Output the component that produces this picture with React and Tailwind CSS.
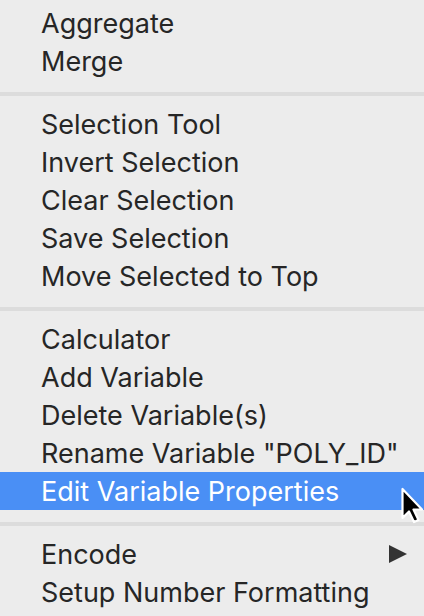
import React from "react";

const Row = ({ children, active, arrow }) => (
  <div
    className={
      "h-[38px] flex items-center pl-[41px] pr-[17px] " +
      (active ? "bg-[#4a8ff5] text-white" : "text-[#262626]")
    }
  >
    <span className="flex-1 whitespace-nowrap pt-[1px]">{children}</span>
    {arrow && (
      <svg width="18" height="18" viewBox="0 0 18 18">
        <path d="M0 0 L18 9 L0 18 Z" fill="#333333" />
      </svg>
    )}
  </div>
);

const Sep = () => (
  <div className="pt-[12px] pb-[9px]">
    <div className="h-[4px] bg-[#dcdcdc]" />
  </div>
);

export default function App() {
  return (
    <div
      className="w-[424px] h-[616px] bg-[#ececec] overflow-hidden relative pt-[4px] text-[27px] leading-none"
      style={{ fontFamily: "Inter, 'Liberation Sans', sans-serif" }}
    >
      <Row>Aggregate</Row>
      <Row>Merge</Row>
      <Sep />
      <Row>Selection Tool</Row>
      <Row>Invert Selection</Row>
      <Row>Clear Selection</Row>
      <Row>Save Selection</Row>
      <Row>Move Selected to Top</Row>
      <Sep />
      <Row>Calculator</Row>
      <Row>Add Variable</Row>
      <Row>Delete Variable(s)</Row>
      <Row>Rename Variable "POLY_ID"</Row>
      <Row active>Edit Variable Properties</Row>
      <Sep />
      <Row arrow>Encode</Row>
      <Row>Setup Number Formatting</Row>
      <svg
        className="absolute left-[400px] top-[487px]"
        width="24"
        height="38"
        viewBox="0 0 24 38"
      >
        <path
          d="M2.5 2 L2.5 31 L9 24.5 L14 35 L18.5 33 L13.5 22.5 L22 22.5 Z"
          fill="#000"
          stroke="#fff"
          strokeWidth="2.2"
          strokeLinejoin="round"
        />
      </svg>
    </div>
  );
}
